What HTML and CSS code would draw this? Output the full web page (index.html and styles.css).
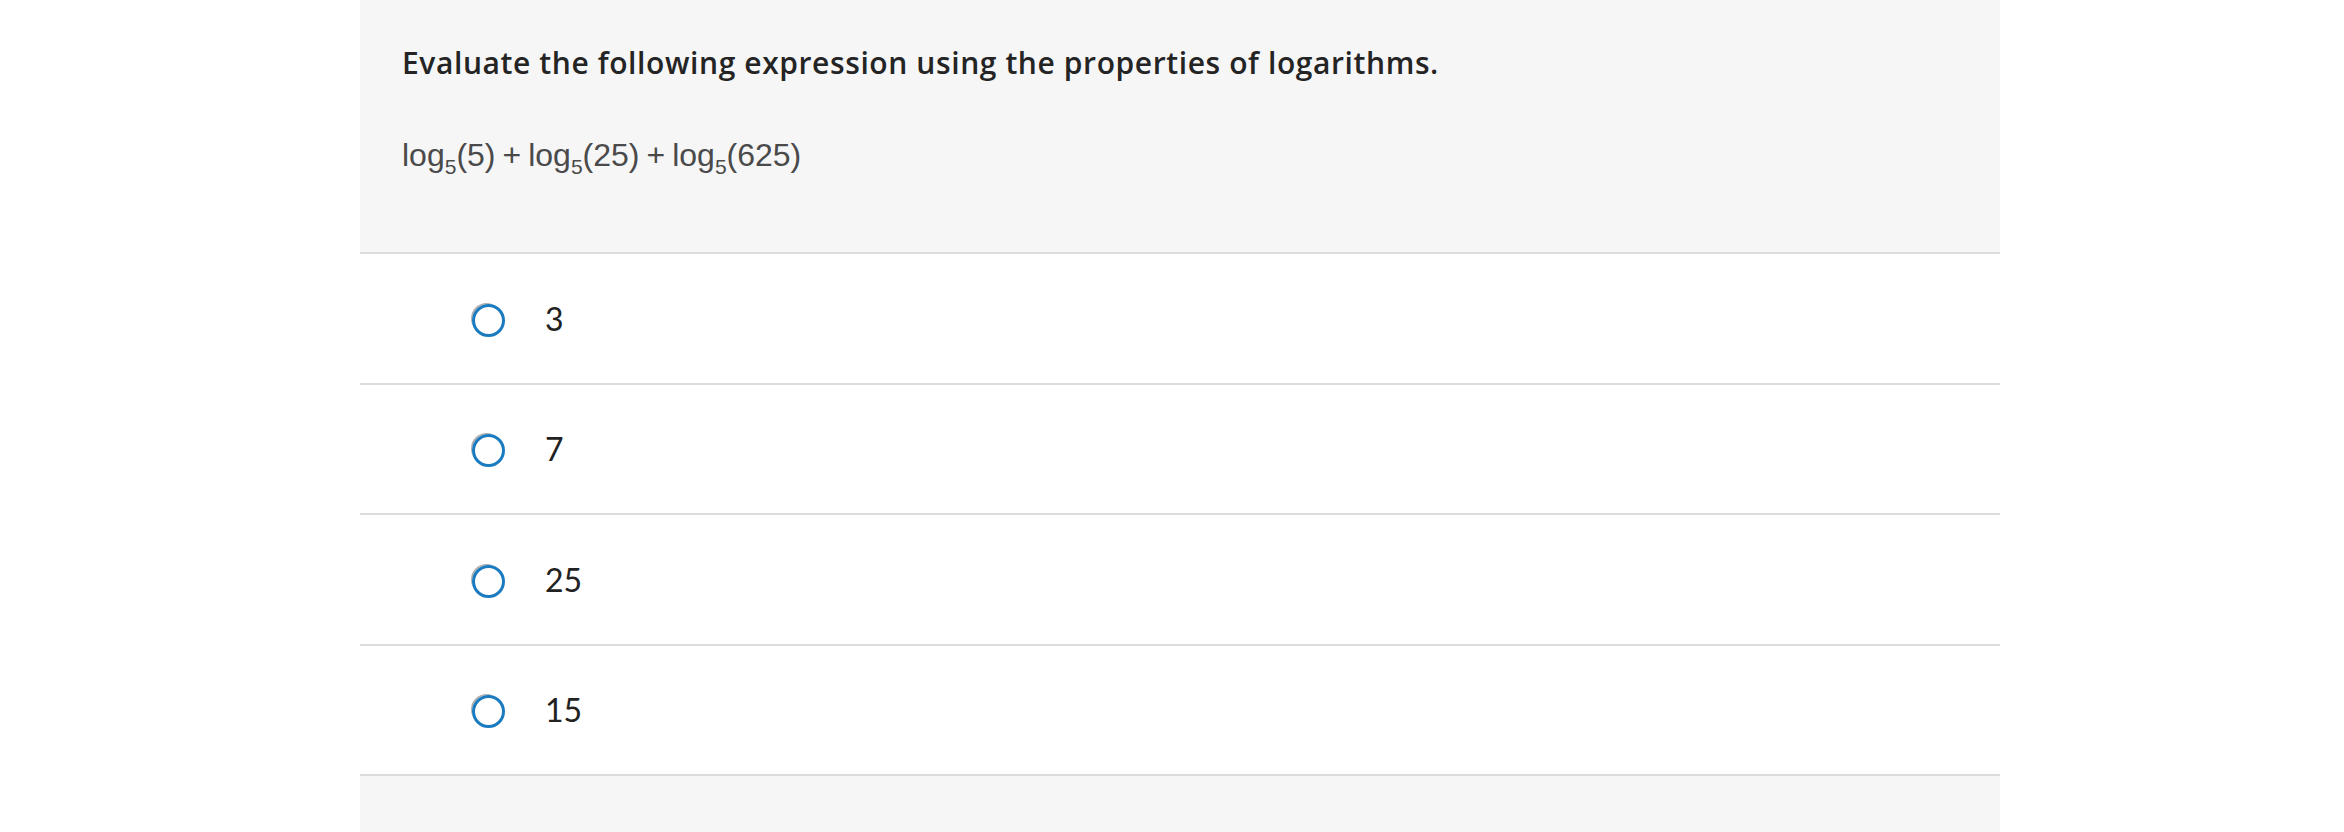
FILE: index.html
```html
<!DOCTYPE html>
<html lang="en">
<head>
<meta charset="utf-8">
<title>Question</title>
<link rel="stylesheet" href="styles.css">
</head>
<body>
<main class="panel">
  <section class="prompt">
    <p class="question">Evaluate the following expression using the properties of logarithms.</p>
    <p class="math"><span class="fn">log</span><span class="sub">5</span><span class="paren">(5)</span><span class="op">+</span><span class="fn">log</span><span class="sub">5</span><span class="paren">(25)</span><span class="op">+</span><span class="fn">log</span><span class="sub">5</span><span class="paren">(625)</span></p>
  </section>
  <ul class="choices">
    <li class="choice"><span class="radio"></span><span class="label">3</span></li>
    <li class="choice"><span class="radio"></span><span class="label">7</span></li>
    <li class="choice"><span class="radio"></span><span class="label">25</span></li>
    <li class="choice"><span class="radio"></span><span class="label">15</span></li>
  </ul>
  <div class="footer"></div>
</main>
</body>
</html>
```

FILE: styles.css
```css
html, body {
  margin: 0;
  padding: 0;
  background: #ffffff;
}
body {
  font-family: "Open Sans", "Lato", sans-serif;
  color: #222222;
}
.panel {
  margin-left: 360px;
  width: 1640px;
  display: flex;
  flex-direction: column;
}
.prompt {
  background: #f6f6f6;
  height: 254px;
  box-sizing: border-box;
  padding: 43px 0 0 42px;
  border-bottom: 2px solid #dcdcdc;
}
.question {
  margin: 0;
  font-size: 30px;
  font-weight: 600;
  letter-spacing: 0.6px;
  line-height: 40px;
  color: #242424;
}
.math {
  margin: 52px 0 0 0;
  font-family: "Liberation Sans", Arial, sans-serif;
  font-size: 32px;
  line-height: 40px;
  color: #4a4a4a;
  white-space: nowrap;
}
.math .sub {
  font-size: 21px;
  position: relative;
  top: 8px;
}
.op {
  margin: 0 7px;
}
.choices {
  list-style: none;
  margin: 0;
  padding: 0;
}
.choice {
  height: 128.5px;
  border-bottom: 2px solid #dcdcdc;
  display: flex;
  align-items: center;
  padding-left: 112px;
  gap: 40px;
}
.radio {
  width: 33px;
  height: 33px;
  box-sizing: border-box;
  border: 3.5px solid #1b7bc0;
  border-radius: 50%;
  box-shadow: -2px -2px 0 -1px rgba(120,120,120,0.6);
  flex: none;
  margin-top: 4px;
}
.label {
  font-family: "Lato", "Open Sans", sans-serif;
  font-size: 32px;
  font-weight: 400;
  color: #222222;
}
.footer {
  background: #f6f6f6;
  height: 60px;
}
```
